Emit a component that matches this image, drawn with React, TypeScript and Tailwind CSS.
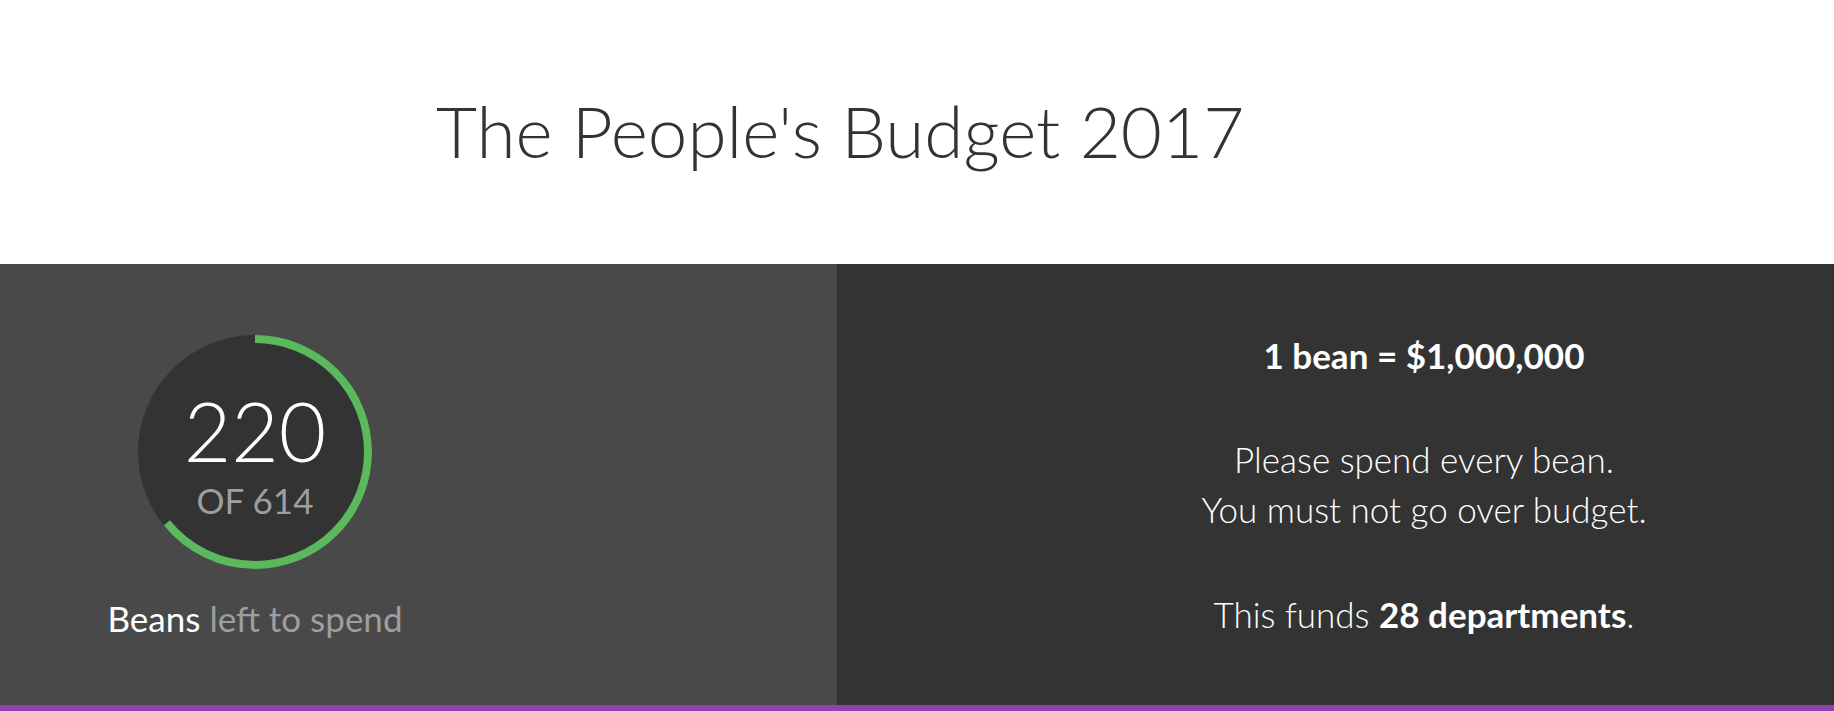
const TOTAL = 614;
const LEFT = 220;

function BeanRing({ left, total }: { left: number; total: number }) {
  const r = 113;
  const c = 2 * Math.PI * r;
  const spent = (total - left) / total;

  return (
    <div className="relative flex h-[234px] w-[234px] flex-col items-center pt-[54px]">
      <svg className="absolute inset-0" width="234" height="234" viewBox="0 0 234 234">
        <circle cx="117" cy="117" r="117" fill="#333333" />
        <circle
          cx="117"
          cy="117"
          r={r}
          fill="none"
          stroke="#5cb85c"
          strokeWidth="8"
          strokeDasharray={`${c * spent} ${c}`}
          transform="rotate(-90 117 117)"
        />
      </svg>
      <span className="relative text-[82px] font-light leading-[82px] text-white">{left}</span>
      <span className="relative mt-[12px] text-[35px] leading-[35px] text-[#9e9e9e]">OF {total}</span>
    </div>
  );
}

export default function App() {
  return (
    <div className="font-['Lato','Liberation_Sans',sans-serif]">
      <header className="h-[264px] bg-white pl-[436px] pt-[95px]">
        <h1 className="text-[71px] font-light leading-[71px] text-[#333333]">
          The People's Budget 2017
        </h1>
      </header>

      <div className="flex h-[441px]">
        <div className="w-[837px] bg-[#494949]">
          <div className="flex w-[510px] flex-col items-center pt-[71px]">
            <BeanRing left={LEFT} total={TOTAL} />
            <p className="mt-[32px] text-[35px] leading-[35px]">
              <span className="text-white">Beans</span>{" "}
              <span className="text-[#9e9e9e]">left to spend</span>
            </p>
          </div>
        </div>

        <div className="flex-1 bg-[#333333] pl-[177px] pt-[66px] text-center text-[35px] leading-[50px] text-white">
          <p className="mb-[54px] font-bold">1 bean = $1,000,000</p>
          <p className="mb-[55px] font-light">
            Please spend every bean.
            <br />
            You must not go over budget.
          </p>
          <p className="font-light">
            This funds <span className="font-bold">28 departments</span>.
          </p>
        </div>
      </div>

      <div className="h-[6px] bg-[#8e44ad]" />
    </div>
  );
}
